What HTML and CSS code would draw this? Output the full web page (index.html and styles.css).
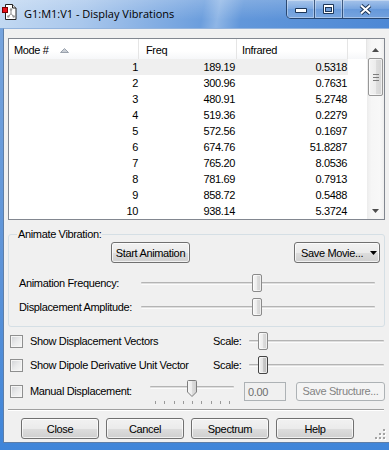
FILE: index.html
```html
<!DOCTYPE html>
<html lang="en">
<head>
  <meta charset="UTF-8">
  <meta name="viewport" content="width=device-width, initial-scale=1.0">
  <title>G1:M1:V1 - Display Vibrations</title>
  <link rel="stylesheet" href="styles.css">
</head>
<body>
  <div class="window">
    <div class="titlebar">
      <svg class="app-icon" width="16" height="16" viewBox="0 0 16 16">
        <path d="M3.5 0.5h7l3.5 3.5v11.5h-10.5z" fill="#fff" stroke="#222"/>
        <path d="M10.5 0.5v3.5h3.5" fill="#e4e4e4" stroke="#222"/>
        <path d="M9 5.5v4M9 9.5l-2.5 3M9 9.5l2.5 3" stroke="#8a8a8a" fill="none"/>
        <circle cx="9" cy="5.5" r="1.2" fill="#9a9a9a"/>
        <circle cx="6.3" cy="12.5" r="1.2" fill="#9a9a9a"/>
        <circle cx="11.7" cy="12.5" r="1.2" fill="#9a9a9a"/>
        <rect x="0.5" y="3.5" width="5" height="5" fill="#e8101a" stroke="#7a0000"/>
      </svg>
      <span class="title">G1:M1:V1 - Display Vibrations</span>
      <div class="caption-buttons">
        <div class="cap-btn cap-min">
          <svg width="12" height="5" viewBox="0 0 12 5"><rect x="0" y="0" width="12" height="5" rx="1" fill="#1d3657"/><rect x="1" y="1" width="10" height="3" fill="#fff"/></svg>
        </div>
        <div class="cap-btn cap-max">
          <svg width="11" height="10" viewBox="0 0 11 10"><rect x="0" y="0" width="11" height="10" rx="1" fill="#1d3657"/><rect x="1" y="1" width="9" height="8" fill="#fff"/><rect x="2" y="3" width="7" height="5" fill="#1d3657"/><rect x="3" y="4" width="5" height="3" fill="#6e9bd6"/></svg>
        </div>
        <div class="cap-btn cap-close">
          <svg width="13" height="11" viewBox="0 0 13 11"><path d="M2 1.5l9 8M11 1.5l-9 8" stroke="#1d3657" stroke-width="4"/><path d="M2 1.5l9 8M11 1.5l-9 8" stroke="#fff" stroke-width="2"/></svg>
        </div>
      </div>
    </div>

    <div class="client">
      <div class="listview">
        <div class="lv-main">
          <div class="lv-head">
            <div class="lv-th">Mode # <svg class="sort-arrow" width="9" height="5" viewBox="0 0 9 5"><polygon points="0.5,4.5 4.5,0.5 8.5,4.5" fill="#c9ced5" stroke="#9aa2ad"/></svg></div>
            <div class="lv-th lv-th-freq">Freq</div>
            <div class="lv-th">Infrared</div>
            <div class="lv-th"></div>
          </div>
          <div class="lv-row selected"><span>1</span><span>189.19</span><span>0.5318</span></div>
          <div class="lv-row"><span>2</span><span>300.96</span><span>0.7631</span></div>
          <div class="lv-row"><span>3</span><span>480.91</span><span>5.2748</span></div>
          <div class="lv-row"><span>4</span><span>519.36</span><span>0.2279</span></div>
          <div class="lv-row"><span>5</span><span>572.56</span><span>0.1697</span></div>
          <div class="lv-row"><span>6</span><span>674.76</span><span>51.8287</span></div>
          <div class="lv-row"><span>7</span><span>765.20</span><span>8.0536</span></div>
          <div class="lv-row"><span>8</span><span>781.69</span><span>0.7913</span></div>
          <div class="lv-row"><span>9</span><span>858.72</span><span>0.5488</span></div>
          <div class="lv-row"><span>10</span><span>938.14</span><span>5.3724</span></div>
        </div>
        <div class="vscroll">
          <div class="sb-btn sb-up"><svg width="7" height="4" viewBox="0 0 7 4"><polygon points="0,4 3.5,0 7,4" fill="#4d4d4d"/></svg></div>
          <div class="sb-track">
            <div class="sb-thumb">
              <svg width="6" height="7" viewBox="0 0 6 7"><path d="M0 0.5h6M0 3.5h6M0 6.5h6" stroke="#7c7c7c"/></svg>
            </div>
          </div>
          <div class="sb-btn sb-down"><svg width="7" height="4" viewBox="0 0 7 4"><polygon points="0,0 7,0 3.5,4" fill="#4d4d4d"/></svg></div>
        </div>
      </div>

      <fieldset class="group">
        <legend>Animate Vibration:</legend>
        <div class="anim-buttons">
          <button class="btn btn-start">Start Animation</button>
          <button class="btn btn-movie"><span>Save Movie...</span><svg width="7" height="4" viewBox="0 0 7 4"><polygon points="0,0 7,0 3.5,4" fill="#000"/></svg></button>
        </div>
        <div class="slider-row first">
          <span class="slider-label">Animation Frequency:</span>
          <div class="slider slider-anim"><div class="track"></div><div class="thumb" style="left:111px"></div></div>
        </div>
        <div class="slider-row">
          <span class="slider-label">Displacement Amplitude:</span>
          <div class="slider slider-anim"><div class="track"></div><div class="thumb" style="left:111px"></div></div>
        </div>
      </fieldset>

      <div class="options">
        <div class="option-row">
          <label class="check check-wide"><span class="checkbox"></span>Show Displacement Vectors</label>
          <span class="scale-label">Scale:</span>
          <div class="slider slider-scale"><div class="track"></div><div class="thumb" style="left:9px"></div></div>
        </div>
        <div class="option-row">
          <label class="check check-wide"><span class="checkbox"></span>Show Dipole Derivative Unit Vector</label>
          <span class="scale-label">Scale:</span>
          <div class="slider slider-scale"><div class="track"></div><div class="thumb focused" style="left:9px"></div></div>
        </div>
        <div class="option-row manual-row">
          <label class="check check-manual"><span class="checkbox"></span>Manual Displacement:</label>
          <div class="slider-manual">
            <div class="track"></div>
            <svg class="pointer-thumb" style="left:37px" width="10" height="17" viewBox="0 0 10 17">
              <defs><linearGradient id="pt" x1="0" y1="0" x2="1" y2="0"><stop offset="0" stop-color="#f7f7f7"/><stop offset="0.5" stop-color="#ececec"/><stop offset="0.5" stop-color="#dddddd"/><stop offset="1" stop-color="#d0d0d0"/></linearGradient></defs>
              <path d="M0.5 1.5a1 1 0 0 1 1-1h7a1 1 0 0 1 1 1v10.5l-4.5 4.5l-4.5-4.5z" fill="url(#pt)" stroke="#7d7d7d"/>
            </svg>
            <div class="ticks"><i></i><i></i><i></i><i></i><i></i><i></i><i></i><i></i><i></i></div>
          </div>
          <div class="textbox disabled">0.00</div>
          <button class="btn btn-structure" disabled>Save Structure...</button>
        </div>
      </div>

      <div class="separator"></div>

      <div class="dialog-buttons">
        <button class="btn">Close</button>
        <button class="btn">Cancel</button>
        <button class="btn">Spectrum</button>
        <button class="btn">Help</button>
      </div>

      <svg class="size-grip" width="11" height="11" viewBox="0 0 11 11">
        <g fill="#fff"><rect x="9" y="1" width="2" height="2"/><rect x="9" y="5" width="2" height="2"/><rect x="5" y="5" width="2" height="2"/><rect x="9" y="9" width="2" height="2"/><rect x="5" y="9" width="2" height="2"/><rect x="1" y="9" width="2" height="2"/></g>
        <g fill="#a3a3a3"><rect x="8" y="0" width="2" height="2"/><rect x="8" y="4" width="2" height="2"/><rect x="4" y="4" width="2" height="2"/><rect x="8" y="8" width="2" height="2"/><rect x="4" y="8" width="2" height="2"/><rect x="0" y="8" width="2" height="2"/></g>
      </svg>
    </div>
  </div>
</body>
</html>
```

FILE: styles.css
```css
* {
  box-sizing: border-box;
}

body {
  margin: 0;
  overflow: hidden;
  background: #fff;
  color: #000;
  font-family: 'Liberation Sans', Arial, sans-serif;
  font-size: 11px;
  letter-spacing: -0.35px;
}

/* window frame */
.window {
  width: 389px;
  height: 450px;
  display: flex;
  flex-direction: column;
  overflow: hidden;
  background: linear-gradient(180deg, #7aa6de 0%, #5c93d8 60%, #3f85d9 100%);
}

.titlebar {
  height: 28px;
  flex: none;
  display: flex;
  align-items: flex-start;
  background:
    linear-gradient(180deg, rgba(255,255,255,0.2) 0%, rgba(255,255,255,0) 70%),
    linear-gradient(100deg, #c3d9f2 0%, #a9c7ec 22%, #84aee3 40%, #6c9edd 52%, #8fb6e6 56%, #6297da 62%, #4d88d5 100%);
}

.app-icon {
  flex: none;
  margin: 4px 0 0 2px;
}

.title {
  margin: 6px 0 0 6px;
  font-family: 'Open Sans', sans-serif;
  font-size: 11px;
  letter-spacing: 0;
  line-height: 16px;
}

.caption-buttons {
  display: flex;
  height: 19px;
  margin-left: auto;
  margin-right: -6px;
  border: 1px solid rgba(25, 50, 85, 0.8);
  border-top: none;
  border-radius: 0 0 5px 5px;
  overflow: hidden;
}

.cap-btn {
  display: flex;
  justify-content: center;
  align-items: center;
  background: linear-gradient(180deg, rgba(255,255,255,0.35) 0%, rgba(255,255,255,0.12) 50%, rgba(255,255,255,0.02) 50%, rgba(255,255,255,0.2) 100%);
  box-shadow: inset 0 0 0 1px rgba(255,255,255,0.35);
}

.cap-btn + .cap-btn {
  border-left: 1px solid rgba(25, 50, 85, 0.7);
}

.cap-min {
  width: 27px;
  align-items: flex-end;
  padding-bottom: 5px;
}

.cap-max {
  width: 28px;
}

.cap-close {
  width: 52px;
  padding-right: 6px;
}

/* client area */
.client {
  position: relative;
  flex: none;
  height: 415px;
  margin-left: 3px;
  padding: 9px 0 0 4px;
  background: #f0f0f0;
  border: 1px solid #5d7ea8;
  border-top-color: #93b3dc;
  border-right: none;
}

/* list view */
.listview {
  display: flex;
  width: 377px;
  height: 182px;
  background: #fff;
  border: 1px solid #828790;
}

.lv-main {
  width: 358px;
}

.lv-head,
.lv-row {
  display: grid;
  grid-template-columns: 130px 98px 111px 19px;
}

.lv-head {
  height: 20px;
}

.lv-th {
  padding: 4px 0 0 5px;
  line-height: 14px;
  border-right: 1px solid #e5e5e5;
  background: linear-gradient(180deg, #fff 0%, #fff 60%, #f6f7f9 100%);
}

.lv-th-freq {
  padding-left: 7px;
}

.sort-arrow {
  margin-left: 9px;
  vertical-align: 1px;
}

.lv-row {
  height: 16px;
}

.lv-row span {
  padding: 1px 1px 0 0;
  line-height: 15px;
  text-align: right;
}

.lv-row span:nth-child(2) {
  padding-right: 2px;
}

.lv-row.selected span {
  background: #efefef;
}

.vscroll {
  width: 17px;
  display: flex;
  flex-direction: column;
  background: linear-gradient(90deg, #ececec 0%, #f6f6f6 25%, #f8f8f8 75%, #efefef 100%);
}

.sb-btn {
  display: flex;
  justify-content: center;
  align-items: center;
}

.sb-up {
  height: 19px;
  padding-top: 3px;
}

.sb-down {
  height: 18px;
  padding-top: 2px;
}

.sb-track {
  flex: 1;
  padding: 0 1px;
}

.sb-thumb {
  display: flex;
  justify-content: center;
  align-items: center;
  height: 38px;
  border: 1px solid #979797;
  border-radius: 2px;
  background: linear-gradient(90deg, #f4f4f4 0%, #ececec 50%, #dedede 51%, #d4d4d4 100%);
  box-shadow: inset 0 0 0 1px rgba(255,255,255,0.6);
}

/* group box */
.group {
  width: 377px;
  min-inline-size: 0;
  margin: 8px 0 0 0;
  padding: 1px 4px 7px 10px;
  border: 1px solid #d5dfe5;
  border-radius: 3px;
}

.group legend {
  margin-left: -2px;
  padding: 0 1px;
  line-height: 13px;
}

.anim-buttons {
  display: flex;
  justify-content: space-between;
}

.btn {
  height: 21px;
  padding: 0;
  display: flex;
  justify-content: center;
  align-items: center;
  font: inherit;
  letter-spacing: inherit;
  color: #000;
  border: 1px solid #707070;
  border-radius: 3px;
  background: linear-gradient(180deg, #f2f2f2 0%, #ebebeb 50%, #dddddd 51%, #cfcfcf 100%);
  box-shadow: inset 0 0 0 1px rgba(255,255,255,0.7);
}

.btn-start {
  width: 79px;
  margin-left: 92px;
}

.btn-movie {
  width: 86px;
  justify-content: space-between;
  padding: 0 2px 0 6px;
}

.slider-row {
  display: flex;
  align-items: center;
  height: 24px;
}

.slider-row.first {
  margin-top: 8px;
}

.slider-label {
  width: 122px;
}

.slider {
  position: relative;
  height: 24px;
  display: flex;
  align-items: center;
}

.slider-anim {
  width: 234px;
}

.track {
  width: 100%;
  height: 3px;
  border-top: 1px solid #b4b4b4;
  border-bottom: 1px solid #fbfbfb;
  border-radius: 1px;
  background: #dedede;
}

.thumb {
  position: absolute;
  top: 3px;
  width: 10px;
  height: 18px;
  border: 1px solid #8a8a8a;
  border-radius: 2px;
  background: linear-gradient(90deg, #f7f7f7 0%, #ececec 50%, #dddddd 51%, #d2d2d2 100%);
  box-shadow: inset 0 0 0 1px rgba(255,255,255,0.6);
}

.thumb.focused {
  border-color: #444;
  background: linear-gradient(90deg, #f2f2f2 0%, #e2e2e2 50%, #c9c9c9 51%, #bdbdbd 100%);
}

/* options below the group box */
.options {
  padding-top: 2px;
}

.option-row {
  display: flex;
  align-items: center;
  height: 24px;
  margin-left: 2px;
}

.check {
  display: flex;
  align-items: center;
}

.check-wide {
  width: 203px;
}

.check-manual {
  width: 140px;
}

.checkbox {
  width: 13px;
  height: 13px;
  margin-right: 7px;
  border: 1px solid #8e8f8f;
  background: linear-gradient(135deg, #cfd1d5 0%, #e9eaeb 50%, #f7f7f7 100%);
  box-shadow: inset 0 0 0 1px #f5f5f5;
}

.scale-label {
  width: 36px;
}

.slider-scale {
  width: 135px;
}

.manual-row {
  height: 28px;
}

.slider-manual {
  position: relative;
  width: 84px;
  height: 28px;
  padding-top: 9px;
}

.pointer-thumb {
  position: absolute;
  top: 3px;
}

.ticks {
  display: flex;
  justify-content: space-between;
  margin: 12px 4px 0 5px;
}

.ticks i {
  width: 1px;
  height: 3px;
  background: #9a9a9a;
}

.textbox {
  width: 42px;
  height: 19px;
  margin-left: 10px;
  padding: 2px 0 0 3px;
  line-height: 14px;
  color: #6d6d6d;
  border: 1px solid #adb2b5;
}

.btn-structure {
  width: 89px;
  height: 19px;
  margin-left: 10px;
  color: #838383;
  border-color: #adb2b5;
  background: #f4f4f4;
  box-shadow: none;
}

.separator {
  width: 376px;
  height: 2px;
  margin-top: 4px;
  border-top: 1px solid #a0a0a0;
  border-bottom: 1px solid #fff;
}

.dialog-buttons {
  display: flex;
  gap: 7px;
  margin-top: 7px;
  padding-left: 13px;
}

.dialog-buttons .btn {
  width: 78px;
}

.size-grip {
  position: absolute;
  right: 3px;
  bottom: 2px;
}
```
